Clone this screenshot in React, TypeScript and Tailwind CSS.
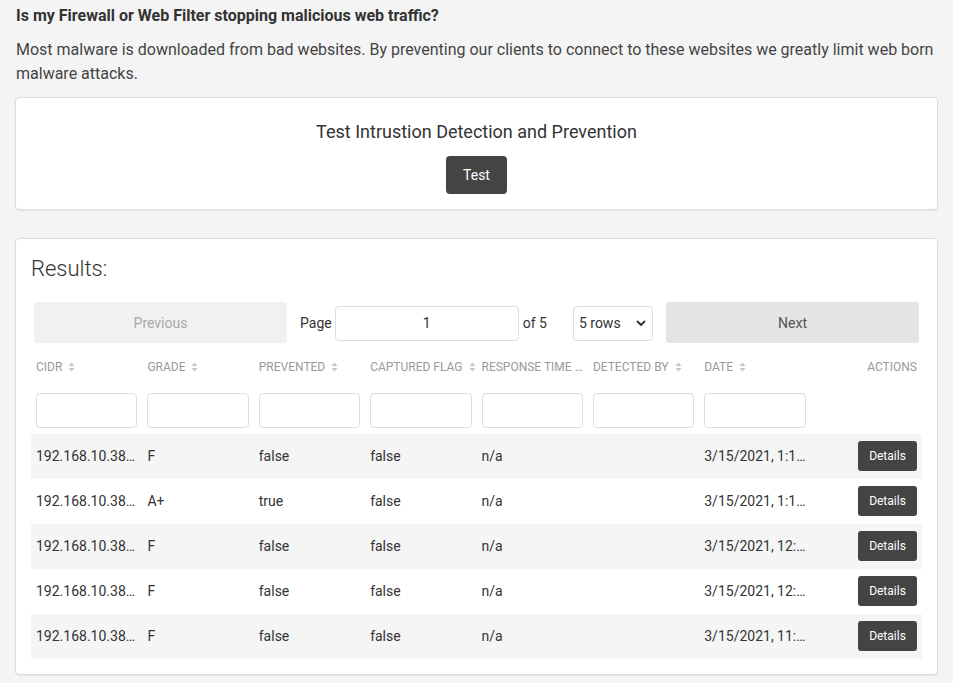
const rows = [
  { cidr: "192.168.10.38/32", grade: "F", prevented: "false", flag: "false", rt: "n/a", by: "", date: "3/15/2021, 1:14:02 PM" },
  { cidr: "192.168.10.38/32", grade: "A+", prevented: "true", flag: "false", rt: "n/a", by: "", date: "3/15/2021, 1:10:47 PM" },
  { cidr: "192.168.10.38/32", grade: "F", prevented: "false", flag: "false", rt: "n/a", by: "", date: "3/15/2021, 12:58:11 PM" },
  { cidr: "192.168.10.38/32", grade: "F", prevented: "false", flag: "false", rt: "n/a", by: "", date: "3/15/2021, 12:41:36 PM" },
  { cidr: "192.168.10.38/32", grade: "F", prevented: "false", flag: "false", rt: "n/a", by: "", date: "3/15/2021, 11:52:09 AM" },
];

const columns = [
  "CIDR",
  "GRADE",
  "PREVENTED",
  "CAPTURED FLAG",
  "RESPONSE TIME (MS)",
  "DETECTED BY",
  "DATE",
];

export default function App() {
  return (
    <div className="min-h-screen bg-[#f4f4f4] px-[15px] pt-[4px] pb-4 font-['Roboto',sans-serif] text-[#333]">
      <h4 className="px-px text-[16px] font-bold leading-[24px] text-[#333]">
        Is my Firewall or Web Filter stopping malicious web traffic?
      </h4>
      <p className="mt-[10px] px-px text-[16px] leading-[24px] text-[#444]">
        Most malware is downloaded from bad websites. By preventing our clients to connect to these websites we greatly limit web born malware attacks.
      </p>

      {/* Test card */}
      <div className="mt-[11px] rounded-[4px] border border-[#dcdcdc] bg-white px-4 pt-[21px] pb-[15px] text-center shadow-[0_1px_2px_rgba(0,0,0,0.06)]">
        <div className="text-[18px] leading-[26px] text-[#333]">
          Test Intrustion Detection and Prevention
        </div>
        <button className="mt-[11px] h-[38px] w-[61px] rounded-[4px] bg-[#444] text-[14px] text-white">
          Test
        </button>
      </div>

      {/* Results card */}
      <div className="mt-[28px] rounded-[4px] border border-[#dcdcdc] bg-white px-[15px] pt-[17px] pb-[15px] shadow-[0_1px_2px_rgba(0,0,0,0.06)]">
        <div className="text-[22px] font-light leading-[26px] text-[#333]">Results:</div>

        {/* Pagination */}
        <div className="mt-[17px] flex p-[3px] text-[14px]">
          <button className="h-[41px] w-[253px] rounded-[3px] bg-[#f1f1f1] pt-px text-[14px] text-[#a9a9a9]">
            Previous
          </button>
          <div className="flex flex-1 items-center justify-center pt-px">
            <span className="text-[#333]">Page</span>
            <input
              readOnly
              value="1"
              className="ml-[3px] h-[35px] w-[184px] rounded-[4px] border border-[#dedede] bg-white text-center text-[14px] text-[#333] outline-none"
            />
            <span className="ml-[4px] text-[#333]">of 5</span>
            <div className="relative ml-[26px] flex h-[35px] w-[80px] items-center rounded-[4px] border border-[#dedede] bg-white pl-[5px] text-[#333]">
              5 rows
              <svg className="absolute right-[6px] top-[13px]" width="10" height="7" viewBox="0 0 10 7" fill="none">
                <path d="M1.5 1.5 5 5l3.5-3.5" stroke="#333" strokeWidth="1.8" strokeLinecap="round" strokeLinejoin="round" />
              </svg>
            </div>
          </div>
          <button className="h-[41px] w-[253px] rounded-[3px] bg-[#e4e4e4] pt-px text-[14px] text-[#555]">
            Next
          </button>
        </div>

        {/* Table header */}
        <div className="grid h-[42px] grid-cols-8 items-center text-[12px] text-[#9a9a9a]">
          {columns.map((c) => (
            <div key={c} className="overflow-hidden whitespace-nowrap px-[5px]">
              <span className="inline-block max-w-full truncate align-middle">{c}</span>
              <SortIcon />
            </div>
          ))}
          <div className="px-[5px] text-right">ACTIONS</div>
        </div>

        {/* Filters */}
        <div className="grid h-[46px] grid-cols-8 pt-[5px]">
          {columns.map((c) => (
            <div key={c} className="px-[5px]">
              <input className="h-[35px] w-full rounded-[4px] border border-[#dedede] bg-white outline-none" />
            </div>
          ))}
          <div />
        </div>

        {/* Rows */}
        {rows.map((r, i) => (
          <div
            key={i}
            className={`grid h-[45px] grid-cols-8 items-center text-[14px] text-[#333] ${
              i % 2 === 0 ? "bg-[#f5f5f5]" : "bg-white"
            }`}
          >
            <div className="truncate px-[5px]">{r.cidr}</div>
            <div className="truncate px-[5px]">{r.grade}</div>
            <div className="truncate px-[5px]">{r.prevented}</div>
            <div className="truncate px-[5px]">{r.flag}</div>
            <div className="truncate px-[5px]">{r.rt}</div>
            <div className="truncate px-[5px]">{r.by}</div>
            <div className="truncate px-[5px]">{r.date}</div>
            <div className="flex justify-end px-[5px] pb-px">
              <button className="h-[30px] w-[59px] rounded-[3px] bg-[#444] text-[12px] text-white">
                Details
              </button>
            </div>
          </div>
        ))}
      </div>
    </div>
  );
}

function SortIcon() {
  return (
    <svg className="ml-[6px] inline-block align-middle" width="7" height="10" viewBox="0 0 7 10" fill="#c8c8c8">
      <path d="M3.5 0.5 6.5 4H0.5z" />
      <path d="M3.5 9.5 0.5 6h6z" />
    </svg>
  );
}
